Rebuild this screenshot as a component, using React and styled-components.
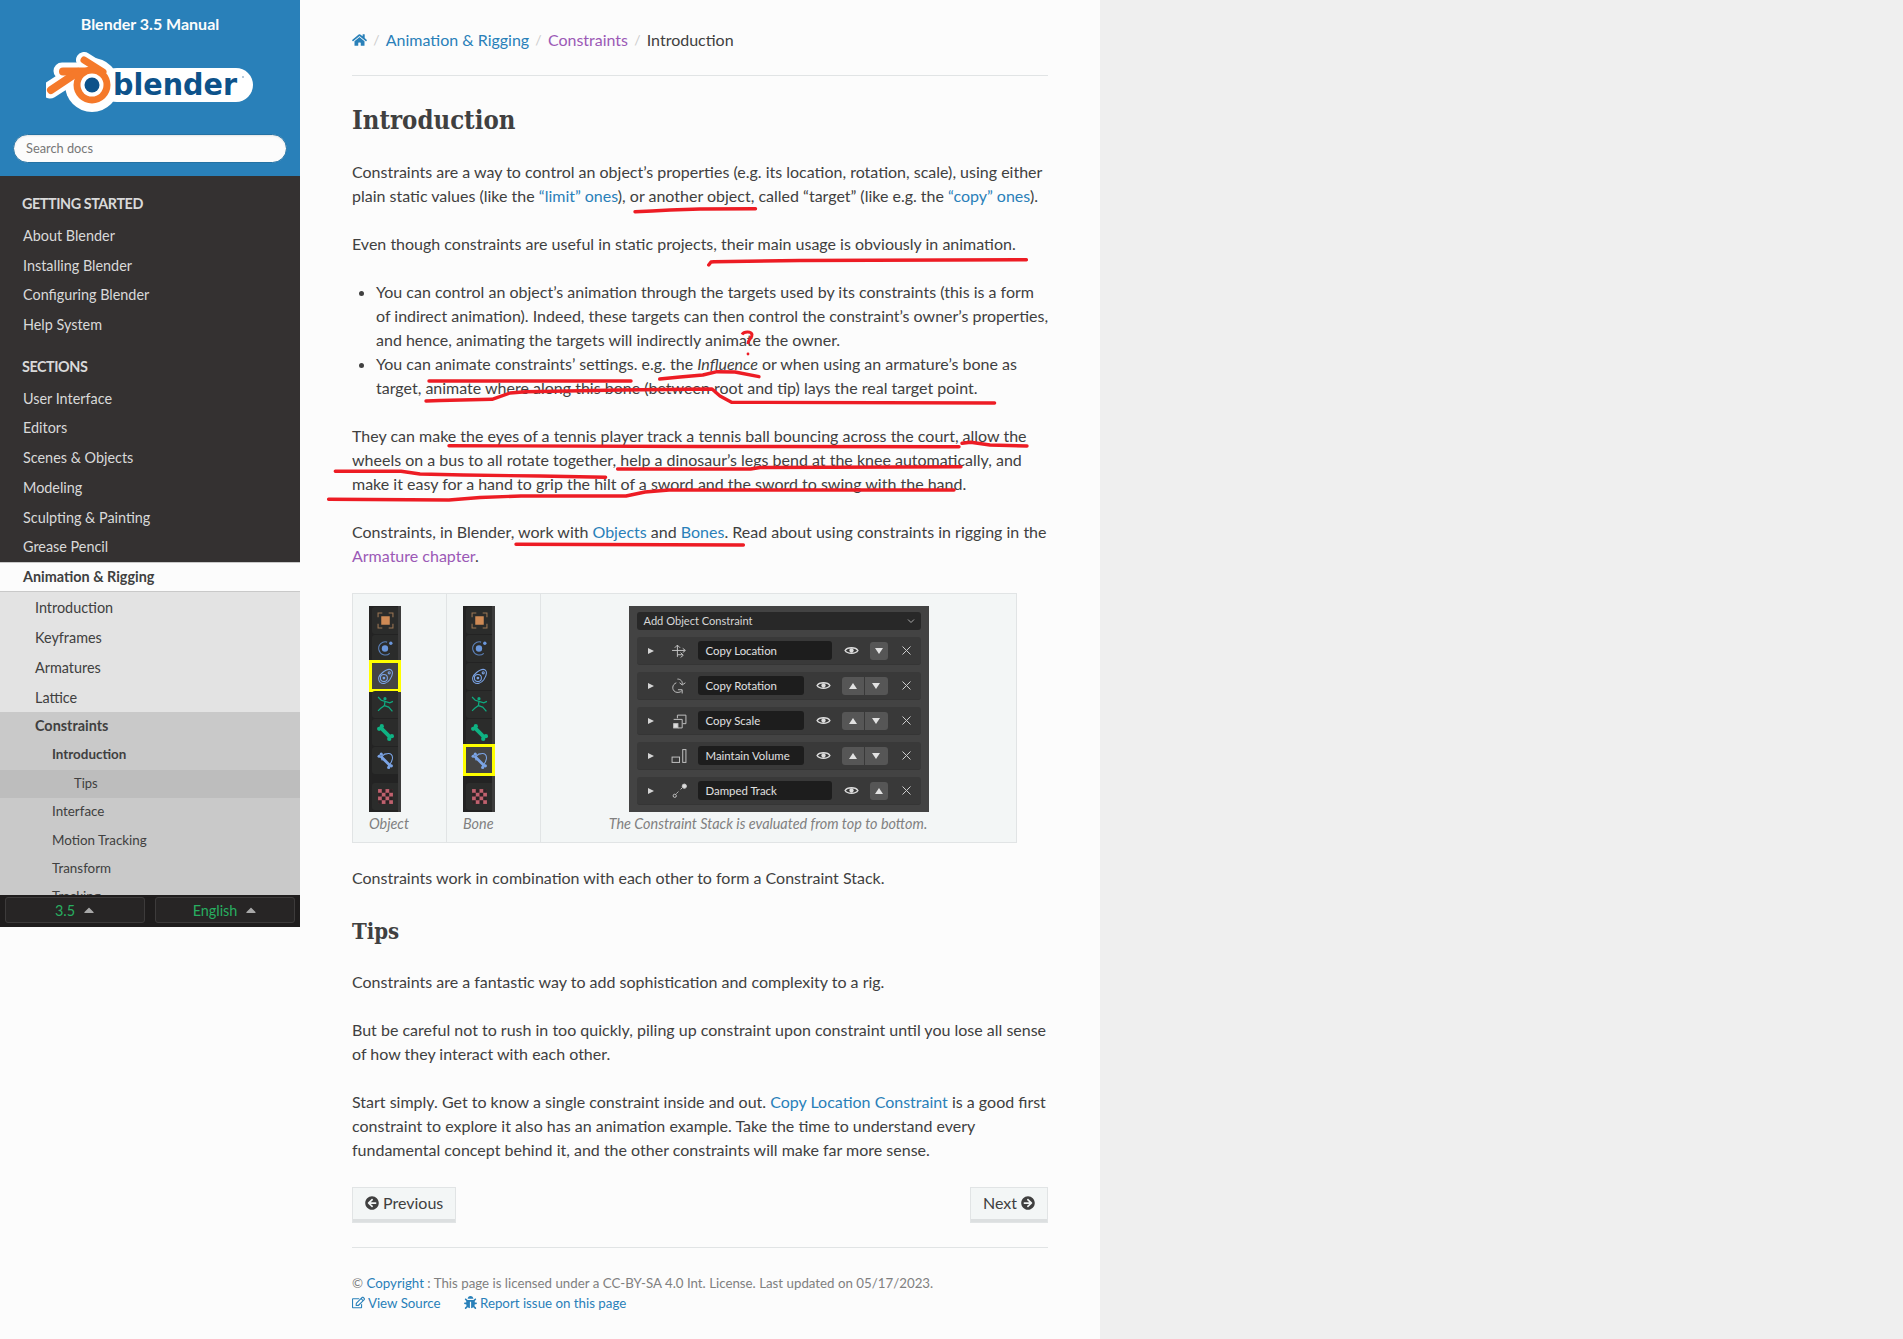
import React from "react";
import styled, { createGlobalStyle } from "styled-components";
import {
  FaHome,
  FaArrowCircleLeft,
  FaArrowCircleRight,
  FaRegEdit,
  FaBug,
  FaCaretUp,
} from "react-icons/fa";

const Global = createGlobalStyle`
  html, body { margin: 0; padding: 0; }
  body {
    background: #efefef;
    font-family: Lato, "Liberation Sans", sans-serif;
    font-size: 16px;
    color: #404040;
    text-rendering: optimizeLegibility;
    font-variant-ligatures: common-ligatures;
  }
  * { box-sizing: border-box; }
`;

const getStarted = ["About Blender", "Installing Blender", "Configuring Blender", "Help System"];
const sections = ["User Interface", "Editors", "Scenes & Objects", "Modeling", "Sculpting & Painting", "Grease Pencil"];
const animItems = ["Introduction", "Keyframes", "Armatures", "Lattice"];
const subItems = ["Interface", "Motion Tracking", "Transform", "Tracking"];

const redLines = [
  "M635 211.7 L652 211 L670 210 L700 209 L755.5 208.7",
  "M708.7 265 L711 262 L714 261.7 L800 260.5 L1026.4 259.7",
  "M429 381 L631 381",
  "M659.7 379 L680 377 L702.8 375 L717 371.7 L735 372 L759 376.7",
  "M426 401 L440 400.5 L492 399.3 L510 393 L525.7 391.7 L620 390 L712 389 L720 396 L731.5 402.3 L994.6 403",
  "M449 445.7 L700 446.5 L959 446.7",
  "M962 443.3 L970.7 442.3 L990 445 L1027 446",
  "M335.3 471.3 L401 471.3 L420 474 L463.5 475 L540 476 L605.6 477.3",
  "M617.6 469 L750.6 469 L760 467.5 L961 466.7",
  "M328.6 499.3 L449 500 L480 497.5 L521 496 L626 496 L645 492 L669 490 L954 490",
  "M516 544.3 L743.4 545",
];

const BlenderLogo = () => (
  <LogoSvg viewBox="46 52 208 60" width="208" height="60">
    <g stroke="#fff" fill="none" strokeLinecap="round">
      <path d="M84 60 L103 72" strokeWidth="16" />
      <path d="M62 71 L92 71" strokeWidth="17" />
      <path d="M50 90 L78 72" strokeWidth="17" />
    </g>
    <circle cx="92" cy="85" r="27" fill="#fff" />
    <rect x="100" y="68" width="153" height="34" rx="17" fill="#fff" />
    <g stroke="#f5792a" fill="none" strokeLinecap="round">
      <path d="M84 60 L103 72" strokeWidth="7" />
      <path d="M63 71.5 L92 71.5" strokeWidth="8" />
      <path d="M51 90 L78 72" strokeWidth="8" />
    </g>
    <circle cx="92" cy="85" r="18.5" fill="#f5792a" />
    <circle cx="92" cy="85" r="11.5" fill="#fff" />
    <circle cx="92" cy="85" r="7.5" fill="#0d528a" />
    <text
      x="113"
      y="95"
      fontFamily="'DejaVu Sans', sans-serif"
      fontWeight="700"
      fontSize="30"
      fill="#0d528a"
      textLength="124"
      lengthAdjust="spacingAndGlyphs"
    >
      blender
    </text>
    <circle cx="243" cy="77" r="1" fill="#9fb9cf" />
  </LogoSvg>
);

const toolIcons = [
  <>
    <path d="M1 5V1H5M11 1H15V5M15 11V15H11M5 15H1V11" stroke="#9c7654" fill="none" />
    <rect x="4" y="4" width="8" height="8" fill="#cf8a55" />
  </>,
  <>
    <path d="M12 12.5A6.2 6.2 0 1 1 9.5 2" stroke="#5c82bb" fill="none" />
    <circle cx="7.5" cy="8" r="3" fill="#6b97dc" />
    <circle cx="13" cy="3" r="1.6" fill="#6b97dc" />
  </>,
  <>
    <path d="M3 13.5C0 10 2 7 5 4.5C8 2 11.500 0.500 13.500 2C15.500 4 14 8 12 11C9.500 14.500 5.500 15.500 3 13.500Z" stroke="#7ba4e6" fill="none" />
    <circle cx="6.500" cy="9.500" r="3.300" stroke="#7ba4e6" fill="none" />
    <circle cx="6.500" cy="9.500" r="1.300" fill="#7ba4e6" />
    <circle cx="11.500" cy="4.500" r="1" stroke="#7ba4e6" fill="none" />
  </>,
  <>
    <circle cx="7.500" cy="2.500" r="1.500" fill="#0fa97f" />
    <path d="M1 1L4 4L7.500 5L12 6.500L15 5M7.500 5L7 9L3.500 11.500L1 14M7 9L11 10.500L14.500 14.500" stroke="#0fa97f" fill="none" strokeWidth="1.200" />
  </>,
  <>
    <path d="M3 3L13 13" stroke="#0fb283" strokeWidth="3.500" />
    <circle cx="2" cy="4.500" r="2" fill="#0fb283" />
    <circle cx="4.500" cy="2" r="2" fill="#0fb283" />
    <circle cx="11.500" cy="14" r="2" fill="#0fb283" />
    <circle cx="14" cy="11.500" r="2" fill="#0fb283" />
  </>,
  <>
    <path d="M5 8C3 5 6 1.500 10 1.500C13 1 15 3 14.500 6.500C14 9 12.500 11.500 10.500 13" stroke="#7ba4e6" fill="none" />
    <path d="M3.500 4L12.500 13" stroke="#7ba4e6" strokeWidth="2.600" />
    <circle cx="2" cy="4" r="1.500" fill="#7ba4e6" />
    <circle cx="4" cy="2" r="1.500" fill="#7ba4e6" />
    <circle cx="11" cy="14.500" r="1.500" fill="#7ba4e6" />
    <circle cx="13.500" cy="13" r="1.500" fill="#7ba4e6" />
  </>,
  <>
    <rect x="1" y="1" width="14" height="14" fill="#c0616e" />
    {[0, 1, 2, 3].flatMap((r) =>
      [0, 1, 2, 3]
        .filter((c) => (r + c) % 2 === 1)
        .map((c) => <rect key={`${r}-${c}`} x={1 + c * 3.5} y={1 + r * 3.5} width="3.500" height="3.500" fill="#2a2224" />)
    )}
  </>,
];

const Toolbar = ({ active }) => (
  <ToolbarWrap>
    {toolIcons.map((icon, i) => (
      <ToolTab key={i} $active={i === active} $last={i === 6}>
        <svg width="17" height="17" viewBox="0 0 16 16">{icon}</svg>
      </ToolTab>
    ))}
  </ToolbarWrap>
);

const stackIcons = [
  <path d="M6 13V2M3.500 4.500L6 2L8.500 4.500M1 7H13M11 5L13.500 7L11 9M6 11H11M9 9L11.500 11.500L9 13.500" />,
  <>
    <path d="M6 1C9 1 11 3 10.500 6M8 4.500L10.500 6.500L13.500 4.500" />
    <path d="M5 4.500C1 6 0.500 11 4 13C6 14 9 13.500 10 12M6.500 11L10.500 11L10.500 14.500" />
  </>,
  <>
    <path d="M6 5V2H14V10H11" />
    <path d="M2.500 6H10.500V14H6.500" />
    <rect x="2.500" y="10" width="4" height="4" fill="#ddd" />
  </>,
  <>
    <rect x="1" y="8.500" width="7" height="5" />
    <rect x="11" y="1.500" width="3" height="12" />
  </>,
  <>
    <path d="M5 10L7.500 7.500M9 6L11 4" strokeDasharray="2 1" />
    <circle cx="3.500" cy="12" r="1.500" />
    <circle cx="12.500" cy="3" r="2" fill="#ddd" />
  </>,
];

const stackRows = [
  { name: "Copy Location", up: false, down: true },
  { name: "Copy Rotation", up: true, down: true },
  { name: "Copy Scale", up: true, down: true },
  { name: "Maintain Volume", up: true, down: true },
  { name: "Damped Track", up: true, down: false },
];

const EyeIcon = () => (
  <svg width="15" height="11" viewBox="0 0 14 10">
    <path d="M1 5C3 1.500 11 1.500 13 5C11 8.500 3 8.500 1 5Z" fill="none" stroke="#ddd" strokeWidth="1.300" />
    <circle cx="7" cy="5" r="2" fill="#ddd" />
  </svg>
);

const ConstraintPanel = () => (
  <Panel>
    <PanelTop>
      Add Object Constraint
      <svg width="8" height="6" viewBox="0 0 8 6">
        <path d="M1 1.500L4 4.500L7 1.500" fill="none" stroke="#aaa" />
      </svg>
    </PanelTop>
    {stackRows.map((row, i) => (
      <StackRow key={row.name}>
        <RowArrow />
        <StackIcon>
          <svg width="16" height="16" viewBox="0 0 15 15" fill="none" stroke="#c4c4c4" strokeWidth="0.900">
            {stackIcons[i]}
          </svg>
        </StackIcon>
        <NameField>{row.name}</NameField>
        <EyeBox>
          <EyeIcon />
        </EyeBox>
        <ArrowGroup>
          {row.up && <ArrowBtn><ArrowUp /></ArrowBtn>}
          {row.down && <ArrowBtn><ArrowDown /></ArrowBtn>}
        </ArrowGroup>
        <CloseBox>
          <svg width="9" height="9" viewBox="0 0 9 9">
            <path d="M0.500 0.500L8.500 8.500M8.500 0.500L0.500 8.500" stroke="#ccc" />
          </svg>
        </CloseBox>
      </StackRow>
    ))}
  </Panel>
);

const App = () => (
  <>
    <Global />
    <Page>
      <Sidebar>
        <SearchArea>
          <ProjectTitle>Blender 3.5 Manual</ProjectTitle>
          <BlenderLogo />
          <SearchInput>Search docs</SearchInput>
        </SearchArea>
        <Nav>
          <Dark>
            <Caption>GETTING STARTED</Caption>
            {getStarted.map((t) => <DarkLink key={t}>{t}</DarkLink>)}
            <Caption $second>SECTIONS</Caption>
            {sections.map((t) => <DarkLink key={t}>{t}</DarkLink>)}
          </Dark>
          <CurrentTop>Animation &amp; Rigging</CurrentTop>
          {animItems.map((t) => <Level1 key={t}>{t}</Level1>)}
          <Level1Current>Constraints</Level1Current>
          <Level2Current>Introduction</Level2Current>
          <Level3>Tips</Level3>
          {subItems.map((t) => <Level2 key={t}>{t}</Level2>)}
        </Nav>
        <VersionBar>
          <VersionBtn>3.5 <FaCaretUp /></VersionBtn>
          <VersionBtn>English <FaCaretUp /></VersionBtn>
        </VersionBar>
      </Sidebar>

      <Main>
        <Crumbs>
          <HomeLink><FaHome /></HomeLink>
          <Slash>/</Slash>
          <A>Animation &amp; Rigging</A>
          <Slash>/</Slash>
          <Visited>Constraints</Visited>
          <Slash>/</Slash>
          <span>Introduction</span>
        </Crumbs>
        <Rule />
        <H1>Introduction</H1>
        <P>
          Constraints are a way to control an object’s properties (e.g. its location, rotation, scale), using either
          plain static values (like the <A>“limit” ones</A>), or another object, called “target” (like e.g. the <A>“copy” ones</A>).
        </P>
        <P>Even though constraints are useful in static projects, their main usage is obviously in animation.</P>
        <List>
          <li>
            You can control an object’s animation through the targets used by its constraints (this is a form
            of indirect animation). Indeed, these targets can then control the constraint’s owner’s properties,
            and hence, animating the targets will indirectly animate the owner.
          </li>
          <li>
            You can animate constraints’ settings. e.g. the <em>Influence</em> or when using an armature’s bone as
            target, animate where along this bone (between root and tip) lays the real target point.
          </li>
        </List>
        <P>
          They can make the eyes of a tennis player track a tennis ball bouncing across the court, allow the
          wheels on a bus to all rotate together, help a dinosaur’s legs bend at the knee automatically, and
          make it easy for a hand to grip the hilt of a sword and the sword to swing with the hand.
        </P>
        <P>
          Constraints, in Blender, work with <A>Objects</A> and <A>Bones</A>. Read about using constraints in rigging in the{" "}
          <Visited>Armature chapter</Visited>.
        </P>
        <Figure>
          <FigCell $narrow>
            <Toolbar active={2} />
            <FigCaption>Object</FigCaption>
          </FigCell>
          <FigCell $narrow>
            <Toolbar active={5} />
            <FigCaption>Bone</FigCaption>
          </FigCell>
          <FigCell>
            <ConstraintPanel />
            <FigCaption $offset>The Constraint Stack is evaluated from top to bottom.</FigCaption>
          </FigCell>
        </Figure>
        <P>Constraints work in combination with each other to form a Constraint Stack.</P>
        <H2>Tips</H2>
        <P>Constraints are a fantastic way to add sophistication and complexity to a rig.</P>
        <P>
          But be careful not to rush in too quickly, piling up constraint upon constraint until you lose all sense
          of how they interact with each other.
        </P>
        <P>
          Start simply. Get to know a single constraint inside and out. <A>Copy Location Constraint</A> is a good first
          constraint to explore it also has an animation example. Take the time to understand every
          fundamental concept behind it, and the other constraints will make far more sense.
        </P>
        <Pager>
          <PagerBtn><FaArrowCircleLeft /> Previous</PagerBtn>
          <PagerBtn>Next <FaArrowCircleRight /></PagerBtn>
        </Pager>
        <FooterRule />
        <Footer>
          <div>© <A>Copyright</A> : This page is licensed under a CC-BY-SA 4.0 Int. License. Last updated on 05/17/2023.</div>
          <FooterLinks>
            <A><FaRegEdit /> View Source</A>
            <A><FaBug /> Report issue on this page</A>
          </FooterLinks>
        </Footer>
        <Scribbles viewBox="300 0 800 1339" width="800" height="1339">
          {redLines.map((d) => (
            <path key={d} d={d} fill="none" stroke="#ed1c24" strokeWidth="3.400" strokeLinecap="round" strokeLinejoin="round" />
          ))}
          <path d="M742 334.500C744 331.500 751 331 752 334.500C752.500 338 748 339 748 344" fill="none" stroke="#ed1c24" strokeWidth="3" />
          <circle cx="748" cy="354" r="1.400" fill="#ed1c24" />
        </Scribbles>
      </Main>
    </Page>
  </>
);

const Page = styled.div`
  display: flex;
  align-items: stretch;
  width: 1100px;
  min-height: 1339px;
  background: #fcfcfc;
`;

const Sidebar = styled.nav`
  display: flex;
  flex-direction: column;
  flex: 0 0 300px;
  height: 927px;
  overflow: hidden;
`;

const SearchArea = styled.div`
  display: flex;
  flex-direction: column;
  align-items: center;
  height: 176px;
  background: #2980b9;
`;

const ProjectTitle = styled.div`
  margin-top: 14px;
  height: 20px;
  line-height: 20px;
  font-size: 16px;
  font-weight: 700;
  color: #fcfcfc;
`;

const LogoSvg = styled.svg`
  display: block;
  margin-top: 18px;
`;

const SearchInput = styled.div`
  width: 274px;
  height: 29px;
  margin-top: 22px;
  padding-left: 12px;
  line-height: 26px;
  font-size: 12.800px;
  color: #777;
  background: #fcfcfc;
  border-radius: 50px;
  border: 1px solid #2472a4;
  box-shadow: inset 0 1px 2px rgba(0, 0, 0, 0.1);
`;

const Nav = styled.div`
  flex: 1;
  min-height: 0;
  overflow: hidden;
  background: #c9c9c9;
`;

const Dark = styled.div`
  padding-top: 11px;
  background: #343131;
`;

const Caption = styled.div`
  height: 34px;
  margin-top: ${(p) => (p.$second ? "10px" : "0")};
  padding-left: 22px;
  line-height: 34px;
  font-size: 14.400px;
  font-weight: 700;
  color: #d9d9d9;
  letter-spacing: -0.45px;
`;

const DarkLink = styled.div`
  height: 29.700px;
  padding-left: 23px;
  line-height: 29.700px;
  font-size: 14.400px;
  color: #d9d9d9;
`;

const CurrentTop = styled.div`
  height: 30px;
  padding-left: 23px;
  line-height: 28px;
  font-size: 14.400px;
  font-weight: 700;
  color: #404040;
  background: #fcfcfc;
  border-top: 1px solid #c9c9c9;
  border-bottom: 1px solid #c9c9c9;
`;

const Level1 = styled.div`
  height: 30px;
  padding-left: 35px;
  line-height: 31px;
  font-size: 14.400px;
  color: #404040;
  background: #e3e3e3;
`;

const Level1Current = styled(Level1)`
  height: 29px;
  line-height: 28px;
  font-weight: 700;
  background: #c9c9c9;
`;

const Level2 = styled.div`
  height: 28.300px;
  padding-left: 52px;
  line-height: 27.300px;
  font-size: 13.400px;
  color: #404040;
  background: #c9c9c9;
`;

const Level2Current = styled(Level2)`
  height: 29px;
  line-height: 27px;
  font-weight: 700;
`;

const Level3 = styled.div`
  height: 28.500px;
  padding-left: 74px;
  line-height: 27px;
  font-size: 13px;
  color: #404040;
  background: #bdbdbd;
`;

const VersionBar = styled.div`
  display: flex;
  gap: 10px;
  flex: 0 0 32px;
  padding: 2px 5px 4px;
  background: #1f1d1d;
`;

const VersionBtn = styled.div`
  display: flex;
  flex: 1;
  align-items: center;
  justify-content: center;
  gap: 8px;
  font-size: 14.400px;
  color: #27ae60;
  background: #272525;
  border: 1px solid #3d3b3b;
  border-radius: 3px;

  svg {
    width: 12px;
    height: 16px;
    color: #a8a8a8;
  }
`;

const Main = styled.main`
  position: relative;
  flex: 1;
  padding: 28px 52px 0;
  line-height: 24px;
`;

const Scribbles = styled.svg`
  position: absolute;
  left: 0;
  top: 0;
  pointer-events: none;
`;

const Crumbs = styled.div`
  display: flex;
  align-items: center;
  height: 24px;
`;

const A = styled.a`
  color: #2980b9;
`;

const Visited = styled.a`
  color: #9b59b6;
`;

const HomeLink = styled(A)`
  display: flex;
  svg {
    width: 15px;
    height: 14px;
  }
`;

const Slash = styled.span`
  margin: 0 6.200px;
  color: #ccc;
  font-size: 14px;
`;

const Rule = styled.hr`
  height: 1px;
  margin: 23px 0 27px;
  border: 0;
  background: #e1e4e5;
`;

const H1 = styled.h1`
  height: 34px;
  margin: 0 0 24px;
  line-height: 34px;
  font-family: "DejaVu Serif", serif;
  font-stretch: condensed;
  font-size: 25.500px;
  font-weight: 700;
  color: #404040;
`;

const H2 = styled.h2`
  height: 30px;
  margin: 26.500px 0 25px;
  line-height: 30px;
  font-family: "DejaVu Serif", serif;
  font-stretch: condensed;
  font-size: 22px;
  font-weight: 700;
  color: #404040;
`;

const P = styled.p`
  margin: -1px 0 25px;
`;

const List = styled.ul`
  margin: -1px -4px 25px 0;
  padding-left: 24px;
`;

const Figure = styled.div`
  display: flex;
  width: 665px;
  height: 250px;
  margin-bottom: 23.500px;
  background: #f3f6f6;
  border: 1px solid #e1e4e5;
`;

const FigCell = styled.div`
  display: flex;
  flex-direction: column;
  align-items: ${(p) => (p.$narrow ? "flex-start" : "center")};
  flex: ${(p) => (p.$narrow ? "0 0 94px" : "1")};
  padding: 12px 0 0 ${(p) => (p.$narrow ? "16px" : "0")};
  border-right: ${(p) => (p.$narrow ? "1px solid #e1e4e5" : "0")};
`;

const FigCaption = styled.div`
  margin-right: ${(p) => (p.$offset ? "21px" : "0")};
  line-height: 24px;
  font-size: 14.400px;
  font-style: italic;
  color: #808080;
`;

const ToolbarWrap = styled.div`
  display: flex;
  flex-direction: column;
  width: 32px;
  height: 206px;
  padding-top: 1px;
  background: linear-gradient(to right, #232323 29px, #3c3c3c 29px);
`;

const ToolTab = styled.div`
  display: flex;
  align-items: center;
  justify-content: center;
  width: 26px;
  height: ${(p) => (p.$active ? "26px" : "27px")};
  margin: ${(p) => (p.$active ? "0 0 2px 3px" : "0 0 1px 3px")};
  margin-top: ${(p) => (p.$last ? "8px" : "0")};
  background: ${(p) => (p.$active ? "#444" : "#2b2c2b")};
  border-radius: ${(p) => (p.$active ? "0" : "3px 0 0 3px")};
  outline: ${(p) => (p.$active ? "3px solid #ff0" : "none")};
`;

const Panel = styled.div`
  display: flex;
  flex-direction: column;
  gap: 7px;
  width: 300px;
  height: 206px;
  padding: 6px 8px 0;
  background: #434343;
`;

const PanelTop = styled.div`
  display: flex;
  align-items: center;
  justify-content: space-between;
  height: 18px;
  margin-bottom: 0;
  padding: 0 6px 0 7px;
  font-size: 11.100px;
  line-height: 18px;
  color: #d6d6d6;
  background: #282828;
  border-radius: 3px;
`;

const StackRow = styled.div`
  display: flex;
  align-items: center;
  height: 28px;
  background: #393939;
  border-bottom: 1px solid #353535;
  border-radius: 3px;
`;

const RowArrow = styled.span`
  width: 0;
  height: 0;
  margin: 0 10px 0 11px;
  border-left: 6px solid #d4d4d4;
  border-top: 3px solid transparent;
  border-bottom: 3px solid transparent;
`;

const StackIcon = styled.div`
  display: flex;
  justify-content: center;
  width: 30px;
  margin-right: 4px;
`;

const NameField = styled.div`
  flex: 1;
  height: 19px;
  padding-left: 8px;
  line-height: 19px;
  font-size: 11.400px;
  color: #e0e0e0;
  background: #1d1d1d;
  border-radius: 3px;
`;

const EyeBox = styled.div`
  display: flex;
  justify-content: center;
  width: 38px;
  padding-left: 1px;
`;

const ArrowGroup = styled.div`
  display: flex;
  gap: 1px;
  overflow: hidden;
  border-radius: 3px;
`;

const ArrowBtn = styled.div`
  display: flex;
  align-items: center;
  justify-content: center;
  width: 22.500px;
  height: 18px;
  background: #565656;

  &:only-child {
    width: 18px;
  }
`;

const ArrowUp = styled.span`
  width: 0;
  height: 0;
  border-left: 4px solid transparent;
  border-right: 4px solid transparent;
  border-bottom: 6px solid #e2e2e2;
`;

const ArrowDown = styled.span`
  width: 0;
  height: 0;
  border-left: 4px solid transparent;
  border-right: 4px solid transparent;
  border-top: 6px solid #e2e2e2;
`;

const CloseBox = styled.div`
  display: flex;
  justify-content: center;
  width: 33px;
  padding-left: 5px;
`;

const Pager = styled.div`
  display: flex;
  justify-content: space-between;
  margin-top: 25px;
`;

const PagerBtn = styled.div`
  display: flex;
  align-items: center;
  gap: 4px;
  height: 36px;
  padding: 0 12px 5px;
  color: #404040;
  background: #f3f6f6;
  border: 1px solid #e1e4e5;
  box-shadow: inset 0 -3px 0 #dcdfe0;

  svg {
    width: 14px;
    height: 14px;
  }
`;

const FooterRule = styled.hr`
  height: 1px;
  margin: 24px 0 25px;
  border: 0;
  background: #e1e4e5;
`;

const Footer = styled.footer`
  line-height: 20px;
  font-size: 13.300px;
  color: #808080;
`;

const FooterLinks = styled.div`
  display: flex;
  gap: 23px;

  svg {
    width: 13px;
    height: 13px;
    vertical-align: -1px;
  }
`;

export default App;
